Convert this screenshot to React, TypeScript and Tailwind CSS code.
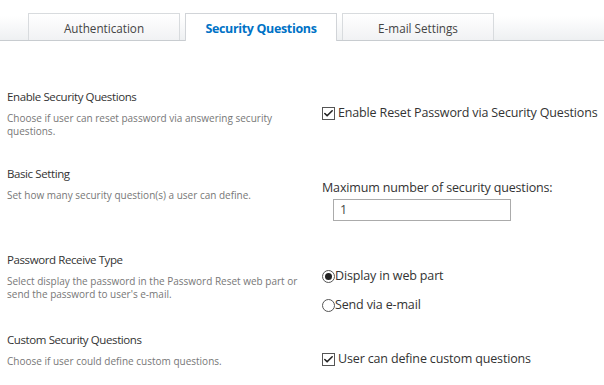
import { Check } from "lucide-react";

const font = { fontFamily: '"Open Sans", "Noto Sans", sans-serif' };

const Tab = ({ label, active }: { label: string; active?: boolean }) => (
  <div
    className={
      active
        ? "w-[152px] h-[28px] -mb-px pt-[3px] border border-b-0 border-[#d1d4d8] bg-white flex items-center justify-center text-[12.5px] font-bold text-[#0072c6] tracking-[-0.35px]"
        : "w-[152px] h-[27px] pt-[3px] border border-b-0 border-[#d8dbde] bg-gradient-to-b from-white to-[#f1f2f4] flex items-center justify-center text-[11.7px] text-[#444]"
    }
  >
    {label}
  </div>
);

const CheckBox = () => (
  <span className="w-[13px] h-[13px] shrink-0 border border-[#555] bg-white flex items-center justify-center">
    <Check size={11} strokeWidth={3.5} className="text-[#222]" />
  </span>
);

const Radio = ({ on }: { on?: boolean }) => (
  <span className="w-[13px] h-[13px] shrink-0 rounded-full border border-[#555] bg-white flex items-center justify-center">
    {on && <span className="w-[7px] h-[7px] rounded-full bg-[#222]" />}
  </span>
);

const Section = ({
  title,
  desc,
  h,
  children,
}: {
  title: string;
  desc: string;
  h: string;
  children: React.ReactNode;
}) => (
  <div className={`flex ${h}`}>
    <div className="w-[322px] pl-[7px] pr-[18px]">
      <div className="text-[11.5px] leading-[18px] tracking-[-0.4px] text-[#333]">{title}</div>
      <div className="mt-[6px] text-[10px] leading-[13px] text-[#777]">{desc}</div>
    </div>
    <div className="flex-1 text-[#333] text-[12.5px] leading-[18px] tracking-[-0.15px]">{children}</div>
  </div>
);

export default function App() {
  return (
    <div className="w-[604px] h-[385px] bg-white overflow-hidden" style={font}>
      {/* Tabs */}
      <div className="pt-[13px] bg-gradient-to-b from-white from-40% to-[#eef0f2] border-b border-[#c8ccd0]">
        <div className="flex pl-[28px] gap-[5px] items-end">
          <Tab label="Authentication" />
          <Tab label="Security Questions" active />
          <Tab label="E-mail Settings" />
        </div>
      </div>

      <div className="pt-[47px]">
        <Section
          h="h-[77px]"
          title="Enable Security Questions"
          desc="Choose if user can reset password via answering security questions."
        >
          <label className="flex items-center gap-[3px] pt-[16px]">
            <CheckBox />
            Enable Reset Password via Security Questions
          </label>
        </Section>

        <Section
          h="h-[86px]"
          title="Basic Setting"
          desc="Set how many security question(s) a user can define."
        >
          <div className="pt-[14px]">Maximum number of security questions:</div>
          <div className="ml-[11px] mt-[2px] w-[178px] h-[22px] border border-[#ababab] px-[6px] leading-[20px] text-[#444]">
            1
          </div>
        </Section>

        <Section
          h="h-[80px]"
          title="Password Receive Type"
          desc="Select display the password in the Password Reset web part or send the password to user's e-mail."
        >
          <div className="pt-[16px]">
            <label className="flex items-center">
              <Radio on />
              Display in web part
            </label>
            <label className="flex items-center mt-[11px]">
              <Radio />
              Send via e-mail
            </label>
          </div>
        </Section>

        <Section
          h="h-[50px]"
          title="Custom Security Questions"
          desc="Choose if user could define custom questions."
        >
          <label className="flex items-center gap-[3px] pt-[19px]">
            <CheckBox />
            User can define custom questions
          </label>
        </Section>
      </div>
    </div>
  );
}
